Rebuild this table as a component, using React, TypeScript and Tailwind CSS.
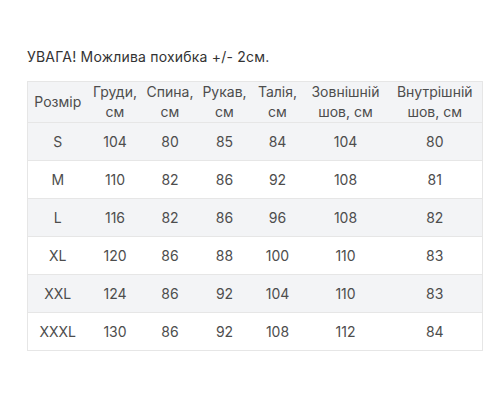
import React from 'react';

// header cells: [first line, second line]
const headers: [string, string?][] = [
  ['Розмір'],
  ['Груди,', 'см'],
  ['Спина,', 'см'],
  ['Рукав,', 'см'],
  ['Талія,', 'см'],
  ['Зовнішній', 'шов, см'],
  ['Внутрішній', 'шов, см'],
];

const rows = [
  ['S', '104', '80', '85', '84', '104', '80'],
  ['M', '110', '82', '86', '92', '108', '81'],
  ['L', '116', '82', '86', '96', '108', '82'],
  ['XL', '120', '86', '88', '100', '110', '83'],
  ['XXL', '124', '86', '92', '104', '110', '83'],
  ['XXXL', '130', '86', '92', '108', '112', '84'],
];

export default function App() {
  return (
    <div className="w-[500px] h-[400px] bg-white pt-[47px] pl-[27px] font-['Inter',sans-serif] text-[14px] leading-[20px] text-[#4d4d4d]">
      <p className="text-[#333] tracking-[0.2px]">УВАГА! Можлива похибка +/- 2см.</p>
      <table className="mt-[14px] w-[455px] table-fixed border border-[#e6e6e6] border-collapse text-center">
        <colgroup>
          <col className="w-[60px]" />
          <col className="w-[55px]" />
          <col className="w-[55px]" />
          <col className="w-[54px]" />
          <col className="w-[52px]" />
          <col className="w-[84px]" />
          <col className="w-[95px]" />
        </colgroup>
        <thead>
          <tr className="bg-[#f3f4f6] h-[41px]">
            {headers.map((h, i) => (
              <th key={i} className="font-normal p-0 align-middle whitespace-nowrap">
                {h[0]}
                {h[1] && (
                  <>
                    <br />
                    {h[1]}
                  </>
                )}
              </th>
            ))}
          </tr>
        </thead>
        <tbody>
          {rows.map((r, i) => (
            <tr key={i} className={`h-[38px] border-t border-[#e6e6e6] ${i % 2 === 0 ? 'bg-[#f3f4f6]' : 'bg-white'}`}>
              {r.map((c, j) => (
                <td key={j} className="p-0">
                  {c}
                </td>
              ))}
            </tr>
          ))}
        </tbody>
      </table>
    </div>
  );
}
